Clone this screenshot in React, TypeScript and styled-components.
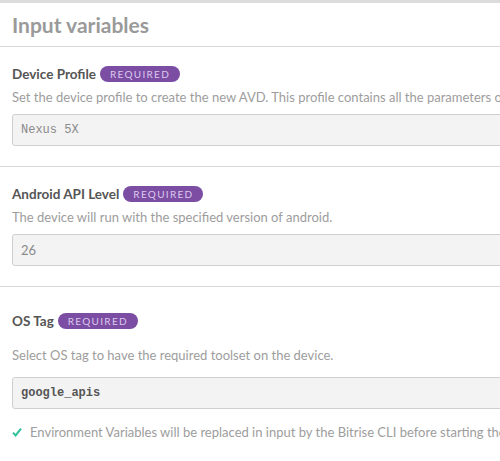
import React from "react"
import styled, { createGlobalStyle, css } from "styled-components"

const GlobalStyle = createGlobalStyle`
  html, body {
    margin: 0;
    padding: 0;
    background: #ffffff;
    overflow: hidden;
  }
  body {
    font-family: Lato, "Liberation Sans", sans-serif;
  }
`

const Page = styled.div`
  width: 800px;
  border-top: 3px solid #dcdcdc;
`

const Header = styled.div`
  height: 43px;
  padding: 0 12px;
  display: flex;
  align-items: center;
  border-bottom: 1px solid #d6d6d6;
`

const Title = styled.h2`
  margin: 0;
  font-size: 21px;
  font-weight: 700;
  color: #9a9a9a;
`

const Section = styled.section<{ $loose?: boolean }>`
  padding: ${({ $loose }) => ($loose ? "24px 12px 20px" : "17px 12px 20px")};
  border-bottom: 1px solid #d6d6d6;
  ${({ $loose }) =>
    $loose &&
    css`
      border-bottom: none;
    `}
`

const LabelRow = styled.div`
  display: flex;
  align-items: center;
  gap: 4px;
  height: 20px;
`

const Label = styled.span`
  font-size: 13.5px;
  font-weight: 700;
  color: #555555;
`

const Badge = styled.span`
  display: inline-flex;
  align-items: center;
  height: 16px;
  padding: 0 10px;
  border-radius: 8px;
  background: #7b4da3;
  color: #dcc9ee;
  font-size: 10px;
  letter-spacing: 1.3px;
`

const Description = styled.p<{ $loose?: boolean }>`
  margin: ${({ $loose }) => ($loose ? "15px 0 0" : "4px 0 0")};
  font-size: 13px;
  line-height: 18px;
  color: #9d9d9d;
  white-space: nowrap;
`

const Field = styled.div<{ $mono?: boolean; $strong?: boolean; $loose?: boolean }>`
  margin-top: ${({ $loose }) => ($loose ? "13px" : "8px")};
  height: 32px;
  box-sizing: border-box;
  display: flex;
  align-items: center;
  padding: 0 8px;
  background: #f3f3f3;
  border: 1px solid #cfcfcf;
  border-radius: 3px;
  font-size: ${({ $mono }) => ($mono ? "12px" : "13px")};
  font-family: ${({ $mono }) =>
    $mono ? `"Liberation Mono", "DejaVu Sans Mono", monospace` : `Lato, sans-serif`};
  font-weight: ${({ $strong }) => ($strong ? 700 : 400)};
  color: ${({ $strong }) => ($strong ? "#555555" : "#8a8a8a")};
`

const Note = styled.div`
  margin-top: 14px;
  display: flex;
  align-items: center;
  gap: 8px;
  font-size: 13px;
  line-height: 18px;
  color: #9d9d9d;
  white-space: nowrap;
`

const Check = () => (
  <svg width="10" height="10" viewBox="0 0 10 10">
    <path d="M1 5.6 L3.6 8.4 L9 1.6" fill="none" stroke="#2fbf9c" strokeWidth="2" />
  </svg>
)

const inputs = [
  {
    label: "Device Profile",
    description:
      "Set the device profile to create the new AVD. This profile contains all the parameters of the device.",
    value: "Nexus 5X",
    mono: true
  },
  {
    label: "Android API Level",
    description: "The device will run with the specified version of android.",
    value: "26",
    mono: false
  }
]

export default function App() {
  return (
    <>
      <GlobalStyle />
      <Page>
        <Header>
          <Title>Input variables</Title>
        </Header>
        {inputs.map((item) => (
          <Section key={item.label}>
            <LabelRow>
              <Label>{item.label}</Label>
              <Badge>REQUIRED</Badge>
            </LabelRow>
            <Description>{item.description}</Description>
            <Field $mono={item.mono}>{item.value}</Field>
          </Section>
        ))}
        <Section $loose>
          <LabelRow>
            <Label>OS Tag</Label>
            <Badge>REQUIRED</Badge>
          </LabelRow>
          <Description $loose>Select OS tag to have the required toolset on the device.</Description>
          <Field $mono $strong $loose>
            google_apis
          </Field>
          <Note>
            <Check />
            Environment Variables will be replaced in input by the Bitrise CLI before starting the step.
          </Note>
        </Section>
      </Page>
    </>
  )
}
